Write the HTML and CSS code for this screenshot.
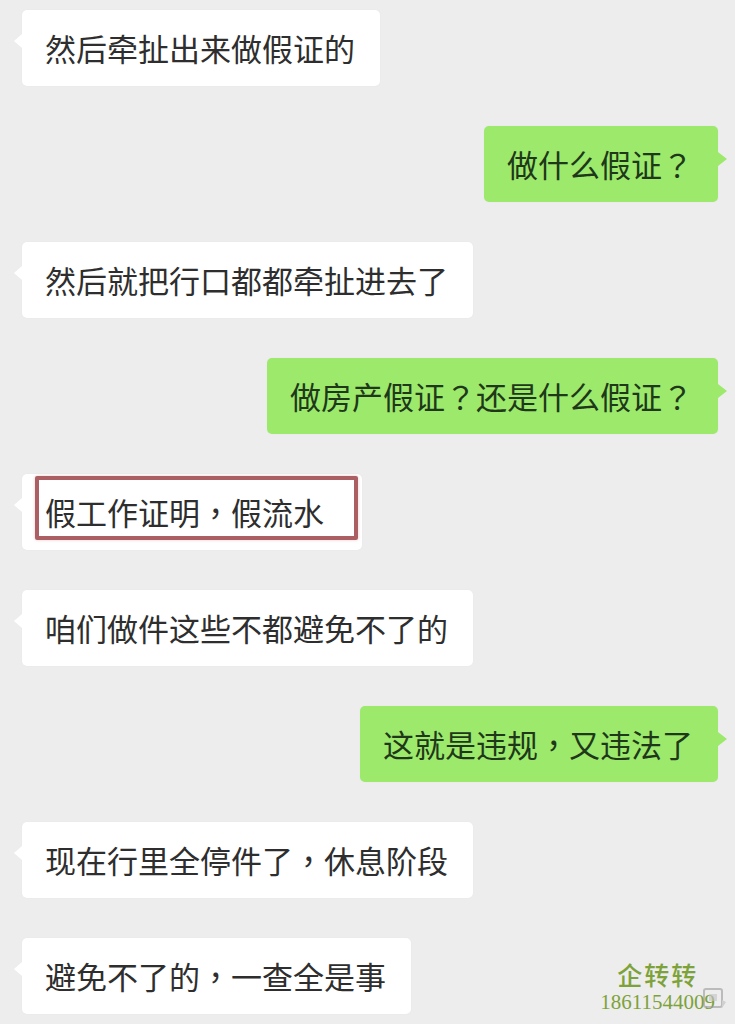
FILE: index.html
```html
<!DOCTYPE html>
<html lang="zh-CN">
<head>
    <meta charset="UTF-8">
    <meta name="viewport" content="width=device-width, initial-scale=1.0">
    <title>聊天记录</title>
    <link rel="stylesheet" href="styles.css">
</head>
<body>

    <!-- Chat log -->
    <div class="chat">
        <div class="msg left"><div class="bubble">然后牵扯出来做假证的</div></div>
        <div class="msg right"><div class="bubble">做什么假证<span class="punct" lang="zh-TW">？</span></div></div>
        <div class="msg left"><div class="bubble">然后就把行口都都牵扯进去了</div></div>
        <div class="msg right"><div class="bubble">做房产假证<span class="punct" lang="zh-TW">？</span>还是什么假证<span class="punct" lang="zh-TW">？</span></div></div>
        <div class="msg left">
            <div class="bubble marked">假工作证明<span class="punct" lang="zh-TW">，</span>假流水<span class="mark-box"></span></div>
        </div>
        <div class="msg left"><div class="bubble">咱们做件这些不都避免不了的</div></div>
        <div class="msg right"><div class="bubble">这就是违规<span class="punct" lang="zh-TW">，</span>又违法了</div></div>
        <div class="msg left"><div class="bubble">现在行里全停件了<span class="punct" lang="zh-TW">，</span>休息阶段</div></div>
        <div class="msg left"><div class="bubble">避免不了的<span class="punct" lang="zh-TW">，</span>一查全是事</div></div>
    </div>

    <!-- Watermark -->
    <div class="watermark">
        <div class="wm-name">企转转</div>
        <div class="wm-phone">18611544009</div>
    </div>
    <svg class="wm-icon" width="26" height="26" viewBox="0 0 26 26">
        <rect x="3" y="3" width="18" height="18" rx="2" fill="none" stroke="#9a9a9a" stroke-width="2"/>
        <rect x="8" y="8" width="8" height="7" fill="#c4c4c4"/>
        <path d="M21 14 L25 16 L21 22 Z" fill="#bdbdbd"/>
    </svg>

</body>
</html>
```

FILE: styles.css
```css
/* Basic Styling */
body {
    font-family: "Noto Sans CJK SC", "Noto Sans", sans-serif;
    background-color: #ededed;
    margin: 0;
    padding: 0;
    width: 735px;
    height: 1024px;
    overflow: hidden;
    position: relative;
}

.chat {
    display: flex;
    flex-direction: column;
    gap: 40px;
    padding: 10px 17px 0 22px;
}

.msg {
    display: flex;
}

.msg.right {
    justify-content: flex-end;
}

.bubble {
    position: relative;
    height: 76px;
    box-sizing: border-box;
    padding: 20px 25px 20px 23px;
    font-size: 31px;
    line-height: 36px;
    color: #2e2e2e;
    background-color: #ffffff;
    border-radius: 5px;
    white-space: nowrap;
    box-shadow: 0 0 2px rgba(0, 0, 0, 0.04);
}

.bubble::before {
    content: "";
    position: absolute;
    top: 24px;
    width: 0;
    height: 0;
    border-top: 7px solid transparent;
    border-bottom: 7px solid transparent;
}

.left .bubble::before {
    left: -8px;
    border-right: 8px solid #ffffff;
}

.right .bubble {
    background-color: #9de96c;
    color: #20381a;
}

.right .bubble::before {
    right: -9px;
    top: 26px;
    border-left: 9px solid #9de96c;
}

.punct {
    font-family: "Noto Sans CJK TC", sans-serif;
}

/* Red annotation box */
.bubble.marked {
    padding-right: 38px;
}

.mark-box {
    position: absolute;
    left: 13px;
    top: 2px;
    width: 323px;
    height: 64px;
    box-sizing: border-box;
    border: 4px solid #ac5f62;
    border-radius: 2px;
    box-shadow: 0 0 3px rgba(200, 90, 90, 0.35);
}

/* Watermark */
.watermark {
    position: absolute;
    right: 20px;
    bottom: 11px;
    display: flex;
    flex-direction: column;
    align-items: center;
    gap: 4px;
}

.wm-name {
    font-family: "Noto Sans CJK SC", serif;
    font-weight: 500;
    font-size: 25px;
    line-height: 26px;
    letter-spacing: 2px;
    color: #7da23a;
}

.wm-phone {
    font-family: "Liberation Serif", serif;
    font-size: 21px;
    line-height: 22px;
    color: #7da23a;
}

.wm-icon {
    position: absolute;
    right: 8px;
    bottom: 12px;
    opacity: 0.6;
}
```
